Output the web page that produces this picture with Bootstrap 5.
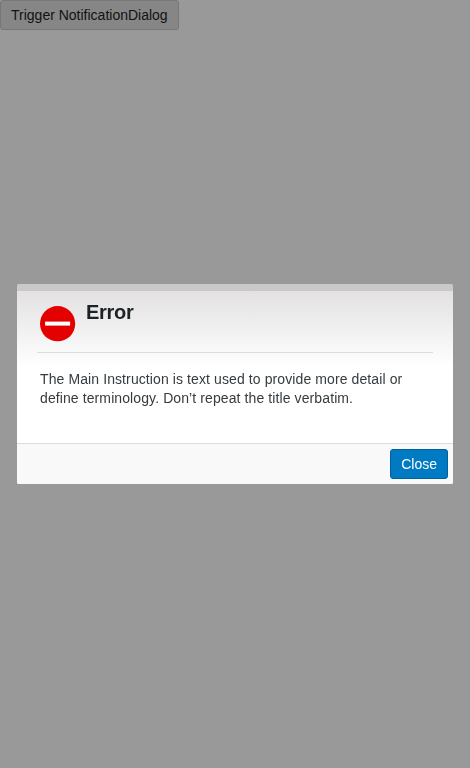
<!DOCTYPE html>
<html lang="en">
<head>
<meta charset="utf-8">
<meta name="viewport" content="width=device-width, initial-scale=1">
<title>Notification Dialog</title>
<link href="https://cdn.jsdelivr.net/npm/bootstrap@5.3.0/dist/css/bootstrap.min.css" rel="stylesheet">
<style>
body { font: 14px/19px "Liberation Sans", Arial, sans-serif; color: #1a1f22; background: #fff; }
.btn { --bs-btn-font-size: 14px; --bs-btn-line-height: 20px; --bs-btn-padding-x: 10px; --bs-btn-padding-y: 4px; --bs-btn-border-radius: 3px; }
.btn-trigger { --bs-btn-color: #1d2226; --bs-btn-bg: #dfdfdf; --bs-btn-border-color: #c6c6c6; }
.btn-close-dialog { --bs-btn-color: #fff; --bs-btn-bg: #007ac2; --bs-btn-border-color: #00619b; }
.modal-backdrop { --bs-backdrop-opacity: .4; }
.modal-dialog { max-width: none; margin: 0 17px; min-height: 100%; }
.modal-content { border: 0; border-top: 7px solid #c8c9ca; border-radius: 2px; height: 200px; background: linear-gradient(#e3e1e2, #fff 76px); }
.modal-header { height: 62px; margin: 0 20px; padding: 0 0 0 3px; border-bottom: 1px solid #dcdcdc; border-radius: 0; }
.status-icon { width: 36px; height: 36px; margin-top: 15px; overflow: visible; }
.modal-title { font-size: 20px; line-height: 24px; font-weight: 700; letter-spacing: -.3px; margin: 9px 0 0 10px; color: #1d2226; }
.modal-body { padding: 17px 23px; color: #353b3f; letter-spacing: .1px; }
.modal-footer { height: 41px; padding: 5px; background: #f9f9f9; border-top: 1px solid #dcdcdc; border-radius: 0 0 2px 2px; }
</style>
<script src="https://cdn.jsdelivr.net/npm/bootstrap@5.3.0/dist/js/bootstrap.bundle.min.js"></script>
</head>
<body class="overflow-hidden">
<button type="button" class="btn btn-trigger d-block">Trigger NotificationDialog</button>
<div class="modal-backdrop show"></div>
<div class="modal d-block" role="alertdialog" aria-modal="true" aria-labelledby="dialogTitle">
  <div class="modal-dialog d-flex align-items-center">
    <div class="modal-content">
      <div class="modal-header d-flex justify-content-start align-items-start">
        <svg class="status-icon flex-shrink-0" viewBox="0 0 36 36" aria-hidden="true">
          <circle cx="17.6" cy="17.7" r="17.6" fill="#e50000"/>
          <rect x="5.1" y="15.6" width="25" height="4" fill="#fff"/>
        </svg>
        <h1 class="modal-title" id="dialogTitle">Error</h1>
      </div>
      <div class="modal-body">The Main Instruction is text used to provide more detail or define terminology. Don’t repeat the title verbatim.</div>
      <div class="modal-footer flex-nowrap">
        <button type="button" class="btn btn-close-dialog m-0">Close</button>
      </div>
    </div>
  </div>
</div>
</body>
</html>
